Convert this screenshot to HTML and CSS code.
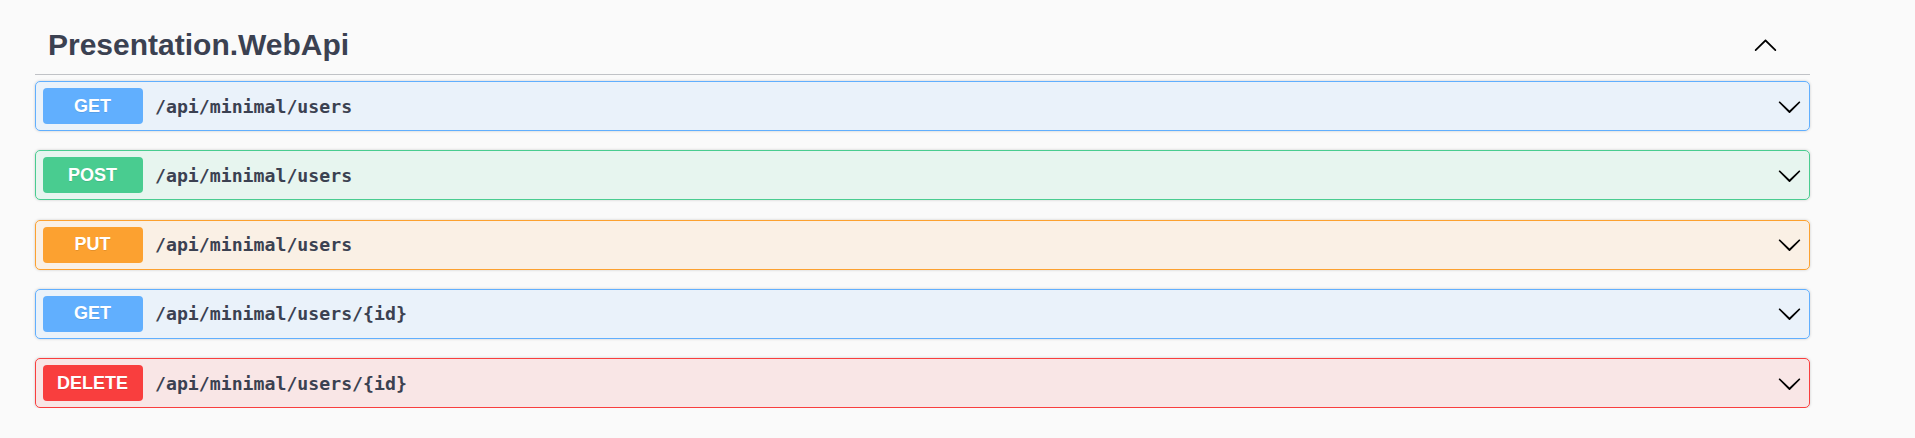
FILE: index.html
```html
<!DOCTYPE html>
<html>
<head>
<meta charset="utf-8">
<link rel="stylesheet" href="styles.css">
</head>
<body>
<div class="wrapper">
  <section class="tag-section">
    <h3 class="tag">
      <span class="tag-title">Presentation.WebApi</span>
      <svg class="arrow" width="25" height="25" viewBox="0 0 20 20"><path d="M17.418 14.908c.272.268.709.268.979 0s.271-.701 0-.969l-7.908-7.83c-.27-.268-.707-.268-.979 0l-7.908 7.83c-.27.268-.27.701 0 .969.271.268.709.268.979 0L10 7.767l7.418 7.141z"/></svg>
    </h3>
    <div class="ops">
      <div class="op op-get">
        <span class="method">GET</span>
        <span class="path">/api/minimal/users</span>
        <svg class="arrow" width="25" height="25" viewBox="0 0 20 20"><path d="M17.418 6.109c.272-.268.709-.268.979 0s.271.701 0 .969l-7.908 7.83c-.27.268-.707.268-.979 0l-7.908-7.83c-.27-.268-.27-.701 0-.969.271-.268.709-.268.979 0L10 13.25l7.418-7.141z"/></svg>
      </div>
      <div class="op op-post">
        <span class="method">POST</span>
        <span class="path">/api/minimal/users</span>
        <svg class="arrow" width="25" height="25" viewBox="0 0 20 20"><path d="M17.418 6.109c.272-.268.709-.268.979 0s.271.701 0 .969l-7.908 7.83c-.27.268-.707.268-.979 0l-7.908-7.830c-.27-.268-.27-.701 0-.969.271-.268.709-.268.979 0L10 13.25l7.418-7.141z"/></svg>
      </div>
      <div class="op op-put">
        <span class="method">PUT</span>
        <span class="path">/api/minimal/users</span>
        <svg class="arrow" width="25" height="25" viewBox="0 0 20 20"><path d="M17.418 6.109c.272-.268.709-.268.979 0s.271.701 0 .969l-7.908 7.83c-.27.268-.707.268-.979 0l-7.908-7.83c-.27-.268-.27-.701 0-.969.271-.268.709-.268.979 0L10 13.25l7.418-7.141z"/></svg>
      </div>
      <div class="op op-get">
        <span class="method">GET</span>
        <span class="path">/api/minimal/users/{id}</span>
        <svg class="arrow" width="25" height="25" viewBox="0 0 20 20"><path d="M17.418 6.109c.272-.268.709-.268.979 0s.271.701 0 .969l-7.908 7.83c-.27.268-.707.268-.979 0l-7.908-7.83c-.27-.268-.27-.701 0-.969.271-.268.709-.268.979 0L10 13.25l7.418-7.141z"/></svg>
      </div>
      <div class="op op-delete">
        <span class="method">DELETE</span>
        <span class="path">/api/minimal/users/{id}</span>
        <svg class="arrow" width="25" height="25" viewBox="0 0 20 20"><path d="M17.418 6.109c.272-.268.709-.268.979 0s.271.701 0 .969l-7.908 7.83c-.27.268-.707.268-.979 0l-7.908-7.83c-.27-.268-.27-.701 0-.969.271-.268.709-.268.979 0L10 13.25l7.418-7.141z"/></svg>
      </div>
    </div>
  </section>
</div>
</body>
</html>
```

FILE: styles.css
```css
html, body {
  margin: 0;
  padding: 0;
  background: #fafafa;
}

body {
  font-family: "Liberation Sans", Arial, sans-serif;
  color: #3b4151;
}

.wrapper {
  padding: 16px 0 0 35px;
}

.tag-section {
  width: 1775px;
}

.tag {
  display: flex;
  align-items: center;
  margin: 0 0 6px 0;
  padding: 12px 32px 12.5px 13px;
  border-bottom: 1px solid rgba(59, 65, 81, 0.3);
  font-size: 30px;
  font-weight: 700;
  line-height: 33.5px;
  color: #3b4151;
}

.tag-title {
  flex: 1;
}

.arrow {
  display: block;
  flex: none;
  fill: #000;
}

.ops {
  display: flex;
  flex-direction: column;
  gap: 19.25px;
}

.op {
  display: flex;
  align-items: center;
  height: 50px;
  box-sizing: border-box;
  padding: 0 7px 0 6.5px;
  border: 1px solid;
  border-radius: 5px;
  box-shadow: 0 0 3px rgba(0, 0, 0, 0.19);
}

.method {
  flex: none;
  width: 100px;
  height: 36px;
  display: flex;
  align-items: center;
  justify-content: center;
  border-radius: 4px;
  font-size: 18px;
  font-weight: 700;
  color: #fff;
  text-shadow: 0 1px 0 rgba(0, 0, 0, 0.1);
}

.path {
  flex: 1;
  padding: 0 12.5px;
  font-family: "DejaVu Sans Mono", "Liberation Mono", monospace;
  font-size: 18.2px;
  font-weight: 700;
  color: #3b4151;
}

.op-get {
  background: rgba(97, 175, 254, 0.1);
  border-color: #61affe;
}
.op-get .method { background: #61affe; }

.op-post {
  background: rgba(73, 204, 144, 0.1);
  border-color: #49cc90;
}
.op-post .method { background: #49cc90; }

.op-put {
  background: rgba(252, 161, 48, 0.1);
  border-color: #fca130;
}
.op-put .method { background: #fca130; }

.op-delete {
  background: rgba(249, 62, 62, 0.1);
  border-color: #f93e3e;
}
.op-delete .method { background: #f93e3e; }
```
